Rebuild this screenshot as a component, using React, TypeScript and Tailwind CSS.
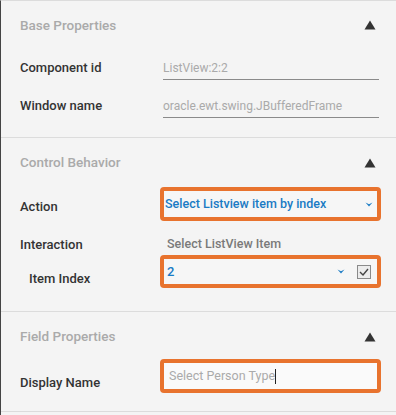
import React from 'react';

const font = { fontFamily: 'Roboto, "Noto Sans", sans-serif' };

function Caret() {
  return (
    <svg width="8" height="5" viewBox="0 0 8 5" className="shrink-0">
      <path d="M0.5 0.5 L4 4.5 L7.5 0.5 L4 2.2 Z" fill="#1a7bc4" />
    </svg>
  );
}

function Collapse() {
  return (
    <svg width="12" height="10" viewBox="0 0 12 10">
      <path d="M6 0.5 L11.5 9.5 L0.5 9.5 Z" fill="#333" />
    </svg>
  );
}

function Header({ title, className = '' }: { title: string; className?: string }) {
  return (
    <div className={`flex items-center justify-between pl-[19px] pr-[20px] ${className}`}>
      <span className="text-[13.5px] font-medium text-[#aaaaaa]">{title}</span>
      <Collapse />
    </div>
  );
}

function Label({ children, className = '' }: { children: React.ReactNode; className?: string }) {
  return <span className={`w-[140px] shrink-0 text-[13px] font-medium text-[#333] ${className}`}>{children}</span>;
}

function TextRow({ label, value, className = '' }: { label: string; value: string; className?: string }) {
  return (
    <div className={`flex items-end pl-[19px] pr-[17px] ${className}`}>
      <Label className="pb-[4px] leading-[16px]">{label}</Label>
      <div className="ml-[3px] flex-1 border-b border-[#8a8a8a] pb-[3px] text-[12px] leading-[16px] text-[#aaaaaa]">
        {value}
      </div>
    </div>
  );
}

function App() {
  return (
    <div className="h-[415px] w-[396px] overflow-hidden border-l border-t border-l-[#444] border-t-[#dcdcdc] bg-[#f4f4f4]" style={font}>
      {/* Base Properties */}
      <section className="border-b border-[#dcdcdc] pb-[19px]">
        <Header title="Base Properties" className="h-[48px]" />
        <TextRow label="Component id" value="ListView:2:2" className="h-[31px]" />
        <TextRow label="Window name" value="oracle.ewt.swing.JBufferedFrame" className="h-[38px]" />
      </section>

      {/* Control Behavior */}
      <section className="border-b border-[#dcdcdc] pb-[23px]">
        <Header title="Control Behavior" className="h-[49px]" />
        <div className="flex h-[34px] items-center pl-[19px] pr-[15px]">
          <Label className="pt-[5px]">Action</Label>
          <div className="flex h-full flex-1 items-center justify-between rounded-[4px] border-4 border-[#e8732e] bg-[#f6f6f6] pl-[1px] pr-[4px]">
            <span className="text-[12.5px] font-medium text-[#1a7bc4]">Select Listview item by index</span>
            <Caret />
          </div>
        </div>
        <div className="flex h-[34px] items-end pb-[1px] pl-[19px] pr-[15px]">
          <Label>Interaction</Label>
          <span className="pl-[7px] text-[12.5px] font-medium text-[#7a7a7a]">Select ListView Item</span>
        </div>
        <div className="flex h-[33px] pl-[19px] pr-[15px]">
          <Label className="self-end pl-[9px]">Item Index</Label>
          <div className="flex h-full flex-1 items-center rounded-[4px] border-4 border-[#e8732e] bg-[#f6f6f6] pl-[1px] pr-[6px]">
            <span className="flex-1 pl-[2px] text-[13px] font-medium text-[#1a7bc4]">2</span>
            <Caret />
            <span className="ml-[12px] flex h-[14px] w-[14px] items-center justify-center border border-[#8a8a8a] bg-[#ececec]">
              <svg width="10" height="8" viewBox="0 0 10 8">
                <path d="M1 4 L4 7 L9 1" fill="none" stroke="#444" strokeWidth="1.4" />
              </svg>
            </span>
          </div>
        </div>
      </section>

      {/* Field Properties */}
      <section className="border-b border-[#dcdcdc] pb-[18px]">
        <Header title="Field Properties" className="h-[47px] pt-[2px]" />
        <div className="flex h-[34px] pl-[19px] pr-[15px]">
          <Label className="w-[134px] self-end pb-[1px]">Display Name</Label>
          <div className="flex h-full flex-1 items-center rounded-[4px] border-4 border-[#e8732e] bg-[#fafafa] pl-[5px]">
            <span className="text-[12.5px] text-[#aaaaaa]">Select Person Type</span>
            <span className="h-[15px] w-px bg-[#222]" />
          </div>
        </div>
      </section>
    </div>
  );
}

export default App;
